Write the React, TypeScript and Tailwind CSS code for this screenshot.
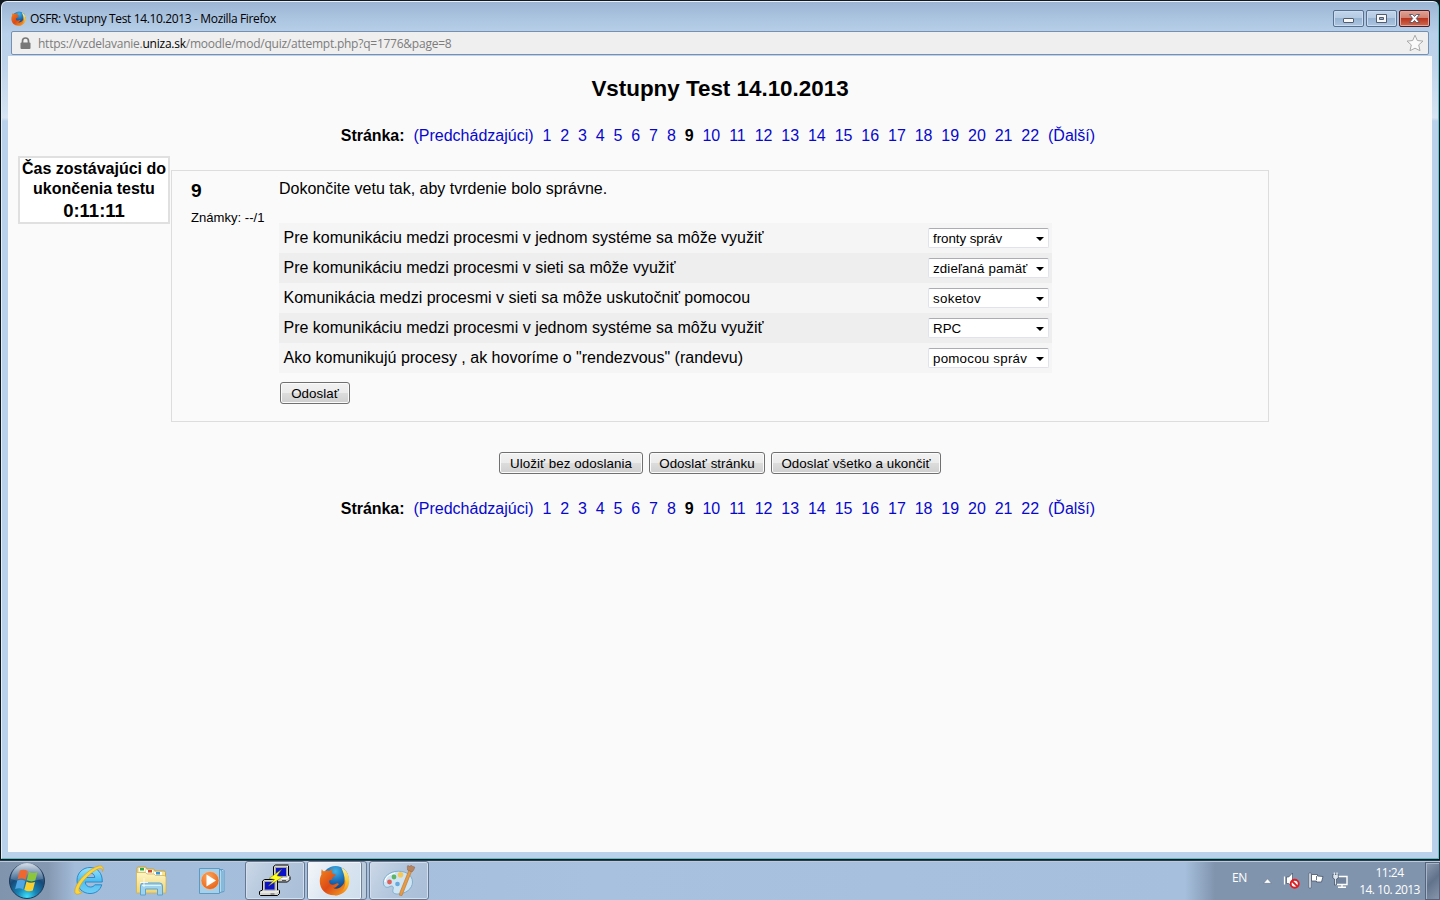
import React from 'react';

const pages = Array.from({ length: 22 }, (_, i) => i + 1);

const questions = [
  { text: 'Pre komunikáciu medzi procesmi v jednom systéme sa môže využiť', answer: 'fronty správ', spacing: 'tracking-[-0.050px]' },
  { text: 'Pre komunikáciu medzi procesmi v sieti sa môže využiť', answer: 'zdieľaná pamäť', spacing: 'tracking-[0.130px]' },
  { text: 'Komunikácia medzi procesmi v sieti sa môže uskutočniť pomocou', answer: 'soketov', spacing: 'tracking-[0.300px]' },
  { text: 'Pre komunikáciu medzi procesmi v jednom systéme sa môžu využiť', answer: 'RPC', spacing: 'tracking-normal' },
  { text: 'Ako komunikujú procesy , ak hovoríme o "rendezvous" (randevu)', answer: 'pomocou správ', spacing: 'tracking-[0.230px]' },
];

function FirefoxIcon({ size }: { size: number }) {
  return (
    <svg width={size} height={size} viewBox="0 0 32 32" className="shrink-0">
      <defs>
        <radialGradient id="globe" cx="0.5" cy="0.2" r="0.8">
          <stop offset="0" stopColor="#3fb4e8" />
          <stop offset="0.5" stopColor="#1b6cb5" />
          <stop offset="1" stopColor="#0c2f6b" />
        </radialGradient>
        <linearGradient id="fox" x1="0" y1="0" x2="1" y2="1">
          <stop offset="0" stopColor="#f0851c" />
          <stop offset="0.5" stopColor="#dd4a16" />
          <stop offset="1" stopColor="#f2a01e" />
        </linearGradient>
        <linearGradient id="tail" x1="0" y1="0" x2="0" y2="1">
          <stop offset="0" stopColor="#fff3a0" />
          <stop offset="0.5" stopColor="#fbc62c" />
          <stop offset="1" stopColor="#ee7b1a" />
        </linearGradient>
      </defs>
      <circle cx="17" cy="14.5" r="13.5" fill="url(#globe)" />
      <path d="M23 2.500 C30 6 32 13 31 19 C29.500 27 23 31.500 16 31.500 C20 29 26 25 26.500 17 C26.700 11 25 7 23 2.500Z" fill="url(#tail)" />
      <path d="M3 4 C3.500 5.500 4.500 6.300 5.500 6.500 C8 5.300 10 5.800 11 6.200 C12 5 13.500 4.300 15 4.200 C13.500 5.200 13 6.500 13.300 8 C14 9.500 16.500 9.300 17.300 10 C17.200 11.600 14.500 12.300 13.500 13.500 L13.700 15.500 C12 14.700 10 15.500 10.500 17.500 C11.200 20.500 14.500 21 17 19.500 C18.500 18.500 20 19 20.500 20 C19 20.200 18.500 23.500 14.500 23.500 C19 26.500 26 22 27 15 C28.500 24 22.500 31 15.500 31.300 C7 31.300 0.700 25 0.800 16.500 C0.900 12.500 2 11 2.500 9.500 C2.300 7.500 2.300 5.500 3 4Z" fill="url(#fox)" />
    </svg>
  );
}

function PageLinks() {
  return (
    <div className="flex h-5 w-full items-center justify-center whitespace-pre text-[16px] leading-5 text-[#0808cc]">
      <b className="tracking-[-0.050px] text-black">Stránka:</b>
      <span className="ml-[9px]">(Predchádzajúci)</span>
      {pages.map((n) =>
        n === 9 ? (
          <b key={n} className="ml-[8.900px] text-black">9</b>
        ) : (
          <span key={n} className="ml-[8.890px]">{n}</span>
        ),
      )}
      <span className="ml-[8.900px] mr-[4px]">(Ďalší)</span>
    </div>
  );
}

function FormButton({ label, width }: { label: string; width: string }) {
  return (
    <button
      className={`flex h-[22px] items-center justify-center whitespace-nowrap rounded-[3px] border border-[#707070] bg-[linear-gradient(#f2f2f2,#ebebeb_50%,#dddddd_50%,#cfcfcf)] pt-[2px] text-[13.333px] leading-none tracking-[0.060px] text-black shadow-[inset_0_0_0_1px_#fbfbfb] ${width}`}
    >
      {label}
    </button>
  );
}

function TitleBar() {
  return (
    <div className="flex h-[29px] shrink-0 items-start pl-[9px] pr-[8px]">
      <div className="flex h-[33px] items-center">
        <FirefoxIcon size={15} />
        <span className="ml-[4px] mt-px whitespace-nowrap font-['Open_Sans','Noto_Sans',sans-serif] text-[12px] tracking-[-0.360px] text-black">
          OSFR: Vstupny Test 14.10.2013 - Mozilla Firefox
        </span>
      </div>
      <div className="ml-auto mt-2 flex gap-[2px]">
        <div className="flex h-[17px] w-[31px] items-center justify-center rounded-[2px] border border-[#58708f] bg-[linear-gradient(#c2d5ea,#b3cae3_48%,#98b4d3_50%,#abc5e2)] shadow-[inset_0_0_0_1px_#cbdcef]">
          <svg width="13" height="13" viewBox="0 0 13 13"><rect x="1.500" y="6.500" width="10" height="4" rx="0.500" fill="#f8f8f4" stroke="#515c70" /></svg>
        </div>
        <div className="flex h-[17px] w-[31px] items-center justify-center rounded-[2px] border border-[#58708f] bg-[linear-gradient(#c2d5ea,#b3cae3_48%,#98b4d3_50%,#abc5e2)] shadow-[inset_0_0_0_1px_#cbdcef]">
          <svg width="13" height="13" viewBox="0 0 13 13"><path d="M1.500 2.500h10v8h-10z M4.500 5.500v2h4v-2z" fill="#f8f8f4" fillRule="evenodd" stroke="#515c70" /></svg>
        </div>
        <div className="flex h-[17px] w-[31px] items-center justify-center rounded-[2px] border border-[#4b1d28] bg-[linear-gradient(#dfa193,#d08070_48%,#b9351f_50%,#cf6a4f)] shadow-[inset_0_0_0_1px_#e2a79a]">
          <svg width="13" height="13" viewBox="0 0 13 13"><path d="M1.500 2.500h3.200l1.800 2 1.800-2h3.200l-3.200 4 3.200 4H8.300l-1.800-2-1.800 2H1.500l3.200-4z" fill="#fff" stroke="#4c5467" strokeWidth="0.900" /></svg>
        </div>
      </div>
    </div>
  );
}

function AddressBar() {
  return (
    <div className="ml-[9px] mr-[9px] flex h-[24px] shrink-0 items-center rounded-[2px] border border-[#7690b0] bg-[#efefef] pl-[8px] pr-[4px]">
      <svg width="11" height="13" viewBox="0 0 11 13" className="shrink-0">
        <path d="M2.500 6V4a3 3 0 0 1 6 0v2" fill="none" stroke="#777" strokeWidth="1.700" />
        <rect x="0.500" y="5.500" width="10" height="6.500" rx="1" fill="#777" />
      </svg>
      <span className="ml-[7px] mt-[2px] whitespace-nowrap font-['Open_Sans','Noto_Sans',sans-serif] text-[12px] leading-5 tracking-[-0.240px] text-[#7c7c7c]">
        https://vzdelavanie.<span className="text-black">uniza.sk</span>/moodle/mod/quiz/attempt.php?q=1776&amp;page=8
      </span>
      <svg width="18" height="18" viewBox="0 0 18 18" className="ml-auto shrink-0">
        <path d="M9 1.200l2.300 5.300 5.700.6-4.300 3.800 1.300 5.800L9 14.200l-5 2.500 1.300-5.800L1 7.100l5.700-.6z" fill="#fafafa" stroke="#a9a9a9" strokeLinejoin="round" />
      </svg>
    </div>
  );
}

function StartOrb() {
  return (
    <svg width="38" height="38" viewBox="0 0 38 38">
      <defs>
        <radialGradient id="orb" cx="0.5" cy="0.95" r="0.9">
          <stop offset="0" stopColor="#3fe0fb" />
          <stop offset="0.3" stopColor="#1787b8" />
          <stop offset="0.65" stopColor="#174a78" />
          <stop offset="1" stopColor="#5e7894" />
        </radialGradient>
        <linearGradient id="gloss" x1="0" y1="0" x2="0" y2="1">
          <stop offset="0" stopColor="#e6eef6" stopOpacity="0.9" />
          <stop offset="1" stopColor="#7b9ab9" stopOpacity="0.350" />
        </linearGradient>
      </defs>
      <circle cx="19" cy="19" r="17.500" fill="url(#orb)" stroke="#1e3857" />
      <path d="M3 17A16 16 0 0 1 35 17C26 19 13 21 3 17Z" fill="url(#gloss)" />
      <path d="M11.800 8.500c2.800-1.300 5.500-1 8 .5l-2.200 8.700c-2.500-1.400-5-1.500-8-.4z" fill="#ee6630" />
      <path d="M21 9.800c2.800 1.600 5.600 1.500 8.500.3l-2.200 8.500c-2.800 1.200-5.500 1-8.500-.5z" fill="#8cc63c" />
      <path d="M9.300 18.600c2.800-1.200 5.300-1 8 .5l-2.200 8.300c-2.500-1.600-5-1.600-8-.4z" fill="#50a5e2" />
      <path d="M18.500 19.600c2.700 1.500 5.500 1.500 8.500.4l-2.200 8.500c-2.800 1.200-5.500 1-8.500-.6z" fill="#fbd02e" />
    </svg>
  );
}

function ExplorerIcon() {
  return (
    <svg width="32" height="32" viewBox="0 0 32 32">
      <defs>
        <linearGradient id="ie" x1="0" y1="0" x2="0" y2="1">
          <stop offset="0" stopColor="#9be4fb" />
          <stop offset="0.5" stopColor="#4ebdf0" />
          <stop offset="1" stopColor="#72d0f5" />
        </linearGradient>
      </defs>
      <path d="M17 3.500c7.500 0 12.500 5.500 12.300 14.500H12.200c.4 3.200 2.200 5 5.300 5 2.100 0 3.500-.8 4.300-2.200h7C27 26.500 22.700 29.500 17 29.500 10 29.500 4 24.300 4 16.500S10 3.500 17 3.500zM12.200 13.500h9.600c-.3-2.900-2-4.400-4.600-4.400-2.700 0-4.600 1.500-5 4.400z" fill="url(#ie)" stroke="#2382c6" strokeWidth="0.900" />
      <path d="M29.500 7.500C31 3 29 .9 25 2.200 18 4.200 8.500 12.500 4 20.500 1 26 1 30.200 4.500 30.200c1.700 0 3.500-1.200 5-2.400-3 .8-4.500-.7-3-4.500C9 16.700 19 7.300 25.500 4.700c2.500-1 4-.3 4 2.800z" fill="#fad53b" stroke="#d49a19" strokeWidth="0.600" />
    </svg>
  );
}

function FolderIcon() {
  return (
    <svg width="34" height="32" viewBox="0 0 34 32">
      <defs>
        <linearGradient id="folder" x1="0" y1="0" x2="0" y2="1">
          <stop offset="0" stopColor="#fff6c6" />
          <stop offset="1" stopColor="#ecd373" />
        </linearGradient>
      </defs>
      <path d="M3 27V3.500Q3 2 4.500 2H12l1 2h7l1 2h9q1.500 0 1.500 1.500V27z" fill="#f4e296" stroke="#c7a549" />
      <rect x="5" y="3" width="6" height="3.500" fill="#fff" /><rect x="6" y="3" width="4" height="2.500" fill="#2ba742" />
      <rect x="12" y="5" width="7" height="3.500" fill="#fff" /><rect x="14" y="5" width="4" height="2.500" fill="#cf4a31" />
      <rect x="20" y="7" width="8" height="3.500" fill="#fff" /><rect x="22" y="7" width="4" height="2.500" fill="#3894d9" />
      <path d="M2.500 7.500h9l1.500 1.500h7l1.500 1.500h8.500q2 0 2 2V28h-29.500z" fill="url(#folder)" stroke="#cfb053" strokeWidth="0.700" />
      <path d="M6.500 30v-9q0-3 3-3h16q3 0 3 3v9h-5v-6h-12v6z" fill="#9fd2ec" stroke="#5fa2cd" />
      <path d="M8 20.500h19" stroke="#d9f2fc" />
      <path d="M10 13v9M6 17.500h8" stroke="#fff" strokeWidth="0.800" />
    </svg>
  );
}

function MediaIcon() {
  return (
    <svg width="30" height="30" viewBox="0 0 30 30">
      <defs>
        <radialGradient id="play" cx="0.4" cy="0.3" r="0.8">
          <stop offset="0" stopColor="#fca358" />
          <stop offset="1" stopColor="#e55d12" />
        </radialGradient>
      </defs>
      <path d="M8 3.500h17l1 1v21l-4 1H8z" fill="#b4daf0" stroke="#5c9cc7" />
      <path d="M22.500 4l1.500 1v21" fill="none" stroke="#5799c6" />
      <path d="M1.500 2.500h20v25h-20z" fill="#a6cfe9" stroke="#5d9ac3" />
      <circle cx="12" cy="14.500" r="9" fill="url(#play)" stroke="#f3c6a1" strokeWidth="0.600" />
      <path d="M8.500 8.500v12l9.500-6z" fill="#fff" />
    </svg>
  );
}

function PuttyIcon() {
  return (
    <svg width="32" height="32" viewBox="0 0 32 32">
      <path d="M14.500 2.500l2-1.500h13v10.500l1.500 1v3l-2.500 2.500H16l-1.500-1z" fill="#d4d4d0" stroke="#000" strokeLinejoin="round" />
      <path d="M16.500 3.500h11v9h-11z" fill="#0b12c8" stroke="#a5a59f" />
      <path d="M15 14.500h13l2.500-2" fill="none" stroke="#fff" />
      <path d="M28 3l1.500-1.500" stroke="#fff" />
      <path d="M3.500 17l2-1.500h13V26l2 .5v3L18.500 31.500H1.500l-1-1v-3l3-1.500z" fill="#d4d4d0" stroke="#000" strokeLinejoin="round" />
      <path d="M5.500 17.500h10.500v8.500H5.500z" fill="#0b12c8" stroke="#a5a59f" />
      <path d="M1.500 28h16l2.500-1.500" fill="none" stroke="#fff" />
      <path d="M11.500 30h4M23 16.500h4" stroke="#555" />
      <path d="M22.500 5.500L10 14.500l5.500 1-6 6.500L23.500 13l-5.500-1.200z" fill="#ffff1a" stroke="#77761a" strokeWidth="0.500" />
    </svg>
  );
}

function PaintIcon() {
  return (
    <svg width="34" height="32" viewBox="0 0 34 32">
      <path d="M13 6.500C5 8 .5 14 1.500 19c.8 3.500 4 4 6.500 2.500 2.500-1.300 4 .3 3 3-.8 3 1 4.500 4.500 4.500 8 0 15-5 15-12 0-7.500-8-12-17.500-10.500z" fill="#cfe5f4" stroke="#7faecd" />
      <path d="M13 8C6 9.500 3 13.500 3 17" fill="none" stroke="#fff" strokeWidth="1.200" />
      <circle cx="7.500" cy="17" r="2.400" fill="#e0605a" />
      <circle cx="12" cy="12" r="2.400" fill="#5eb561" />
      <circle cx="18.500" cy="9.700" r="2.800" fill="#f4c957" />
      <circle cx="15.500" cy="19" r="2.300" fill="#65a9dd" />
      <path d="M27 5l2.500 1.500L20 30.500l-2.500-.3.500-3z" fill="#e69b45" stroke="#b97231" strokeWidth="0.600" />
      <path d="M25.500 5c0-2.500-.5-3.500.3-4.500l1.700.8L29.500.3l1.200 1.200 2 .5c-.3 2.200-1.200 3.500-2.700 5z" fill="#b48463" stroke="#8f6040" strokeWidth="0.500" />
    </svg>
  );
}

function Taskbar() {
  return (
    <div className="flex h-[40px] shrink-0 items-stretch border-t border-[#2c3c4e] bg-[linear-gradient(90deg,#8194ae_0px,#8598b2_48px,#a3bcd9_75px,#a8c1de_600px,#a5bfdc_1185px,#8194ae_1215px,#8094ae_100%)] shadow-[inset_0_1px_0_#bccbdc]">
      <div className="flex w-[245px] items-center">
        <div className="ml-2"><StartOrb /></div>
        <div className="mb-[2px] ml-[27px]"><ExplorerIcon /></div>
        <div className="ml-[29px]"><FolderIcon /></div>
        <div className="ml-[30px]"><MediaIcon /></div>
      </div>
      <div className="flex w-[60px] items-center justify-center rounded-[3px] border border-[#66788f] bg-[linear-gradient(120deg,#cbd8e7,#b2c5dc_50%,#a9bed8)] pb-[2px] shadow-[inset_0_0_0_1px_#d3dfec]"><PuttyIcon /></div>
      <div className="ml-[2px] flex w-[60px] rounded-[3px] border border-[#66788f] bg-[#b9cadd] pr-[3px]">
        <div className="flex w-[54px] items-center justify-center rounded-[2px] border-r border-[#708198] bg-[linear-gradient(120deg,#f4f7fa,#dbe5f0_50%,#cfdeed)] shadow-[inset_0_0_0_1px_#eef4fa]"><FirefoxIcon size={31} /></div>
      </div>
      <div className="ml-[2px] flex w-[60px] items-center justify-center rounded-[3px] border border-[#66788f] bg-[linear-gradient(120deg,#cbd8e7,#b2c5dc_50%,#a9bed8)] shadow-[inset_0_0_0_1px_#d3dfec]"><PaintIcon /></div>
      <div className="ml-auto flex items-center font-['Open_Sans','Noto_Sans',sans-serif] text-[12px] text-white">
        <span className="mb-[5px] mr-[16px] tracking-[-0.300px]">EN</span>
        <svg width="9" height="6" viewBox="0 0 9 6" className="mr-[11px]"><path d="M.5 5.300L4.500 .8l4 4.500z" fill="#fff" stroke="#56677e" strokeWidth="0.500" /></svg>
        <svg width="17" height="17" viewBox="0 0 17 17" className="mr-[8px]">
          <path d="M3.500 5h2.200L9.500 1v14L5.700 11.500H3.500z" fill="#fff" stroke="#445166" strokeWidth="0.700" />
          <path d="M1.500 4.500v8" stroke="#fff" strokeWidth="1.200" />
          <circle cx="11.700" cy="11.700" r="4" fill="#fff" stroke="#dc1f24" strokeWidth="1.900" />
          <path d="M9 9l5.400 5.400" stroke="#dc1f24" strokeWidth="1.900" />
        </svg>
        <svg width="16" height="17" viewBox="0 0 16 17" className="mr-[8px]">
          <path d="M1 1h2v15H1z" fill="#fff" stroke="#46546a" strokeWidth="0.600" />
          <path d="M3.500 2.500h6v1.500l5.500.5-1.500 5.500H8.500V9h-5z" fill="#fff" stroke="#46546a" strokeWidth="0.800" />
          <path d="M8.500 4v4" stroke="#46546a" strokeWidth="0.800" />
        </svg>
        <svg width="17" height="17" viewBox="0 0 17 17" className="mr-[10px]">
          <path d="M4 4.500h11v8H4z" fill="#72849d" stroke="#fff" strokeWidth="1.400" />
          <path d="M6 15.300h8M10 13v2" stroke="#fff" strokeWidth="1.400" />
          <path d="M.8 2.500h5.500V6L4.500 7v6h-2V7L.8 6z" fill="#dce4ee" stroke="#38475c" strokeWidth="0.700" />
          <path d="M2.300 .5v2.500M5 .5v2.500" stroke="#fff" />
        </svg>
        <div className="flex w-[61px] flex-col items-center whitespace-nowrap leading-[17px]">
          <span className="tracking-[-0.500px]">11:24</span>
          <span className="tracking-[-0.560px]">14. 10. 2013</span>
        </div>
        <div className="ml-[5px] h-[38px] w-[15px] border border-[#53647c] bg-[linear-gradient(135deg,#8d9bb0,#61728b_50%,#8796ac)] shadow-[inset_1px_1px_0_#a9b6c7]" />
      </div>
    </div>
  );
}

export default function App() {
  return (
    <div className="flex h-[900px] w-[1440px] flex-col overflow-hidden bg-[#101820] font-['Liberation_Sans',Arial,sans-serif] text-black">
      <div className="flex h-[860px] shrink-0 flex-col pb-px pl-px pr-px pt-px">
        <div className="flex min-h-0 flex-1 flex-col rounded-t-[6px] border border-b-[#55bfc6] border-l-[#e3eef9] border-r-[#58cad2] border-t-[#e8f1fa] bg-[linear-gradient(#9bb5d3_0px,#a9c2de_14px,#b9d1ea_32px,#bdd3ea_60px,#d6e4f3_116px,#b9d1ea_119px,#b9d1ea_100%)]">
          <TitleBar />
          <AddressBar />
          <div className="mb-[6px] ml-[6px] mr-[6px] mt-px flex min-h-0 flex-1 flex-col bg-[#fafafa] pt-[17px]">
            <h1 className="h-[32px] text-center text-[22.400px] font-bold leading-[32px]">Vstupny Test 14.10.2013</h1>
            <div className="mt-[21px]"><PageLinks /></div>
            <div className="mt-[10px] flex items-start pl-[10px]">
              <div className="flex h-[68px] w-[152px] shrink-0 flex-col items-center border-2 border-[#e0e0e0] bg-white pt-px text-center font-bold">
                <div className="whitespace-nowrap text-[16px] leading-5">Čas zostávajúci do<br />ukončenia testu</div>
                <div className="text-[18.500px] leading-[23px]">0:11:11</div>
              </div>
              <div className="ml-px mt-[14px] flex h-[252px] w-[1098px] border border-[#dddddd]">
                <div className="w-[107px] shrink-0 pl-[19px] pt-[9px]">
                  <div className="text-[19.200px] font-bold leading-[22px]">9</div>
                  <div className="mt-[8px] whitespace-nowrap text-[13.100px] leading-4">Známky: --/1</div>
                </div>
                <div className="pt-[8px]">
                  <p className="text-[16px] leading-5">Dokončite vetu tak, aby tvrdenie bolo správne.</p>
                  <div className="mt-[24px] w-[773px]">
                    {questions.map((q, i) => (
                      <div key={i} className={`flex h-[30px] items-center justify-between pl-[4.500px] pr-[3px] ${i % 2 ? 'bg-[#eeeeee]' : 'bg-[#f5f5f5]'}`}>
                        <span className="text-[16px] leading-5">{q.text}</span>
                        <div className="flex h-5 w-[121px] items-center justify-between rounded-[2px] border border-[#e2e3ea] border-t-[#abadb3] bg-white pl-1 pr-1 pt-px text-[13.333px]">
                          <span className={`mt-px whitespace-nowrap leading-none ${q.spacing}`}>{q.answer}</span>
                          <svg width="8" height="4" viewBox="0 0 8 4"><path d="M0 0h8L4 4z" fill="#000" /></svg>
                        </div>
                      </div>
                    ))}
                  </div>
                  <div className="ml-px mt-[9px]"><FormButton label="Odoslať" width="w-[70px]" /></div>
                </div>
              </div>
            </div>
            <div className="mt-[30px] flex justify-center gap-[6px]">
              <FormButton label="Uložiť bez odoslania" width="w-[144px]" />
              <FormButton label="Odoslať stránku" width="w-[116px]" />
              <FormButton label="Odoslať všetko a ukončiť" width="w-[170px]" />
            </div>
            <div className="mt-[25px]"><PageLinks /></div>
          </div>
        </div>
      </div>
      <Taskbar />
    </div>
  );
}
